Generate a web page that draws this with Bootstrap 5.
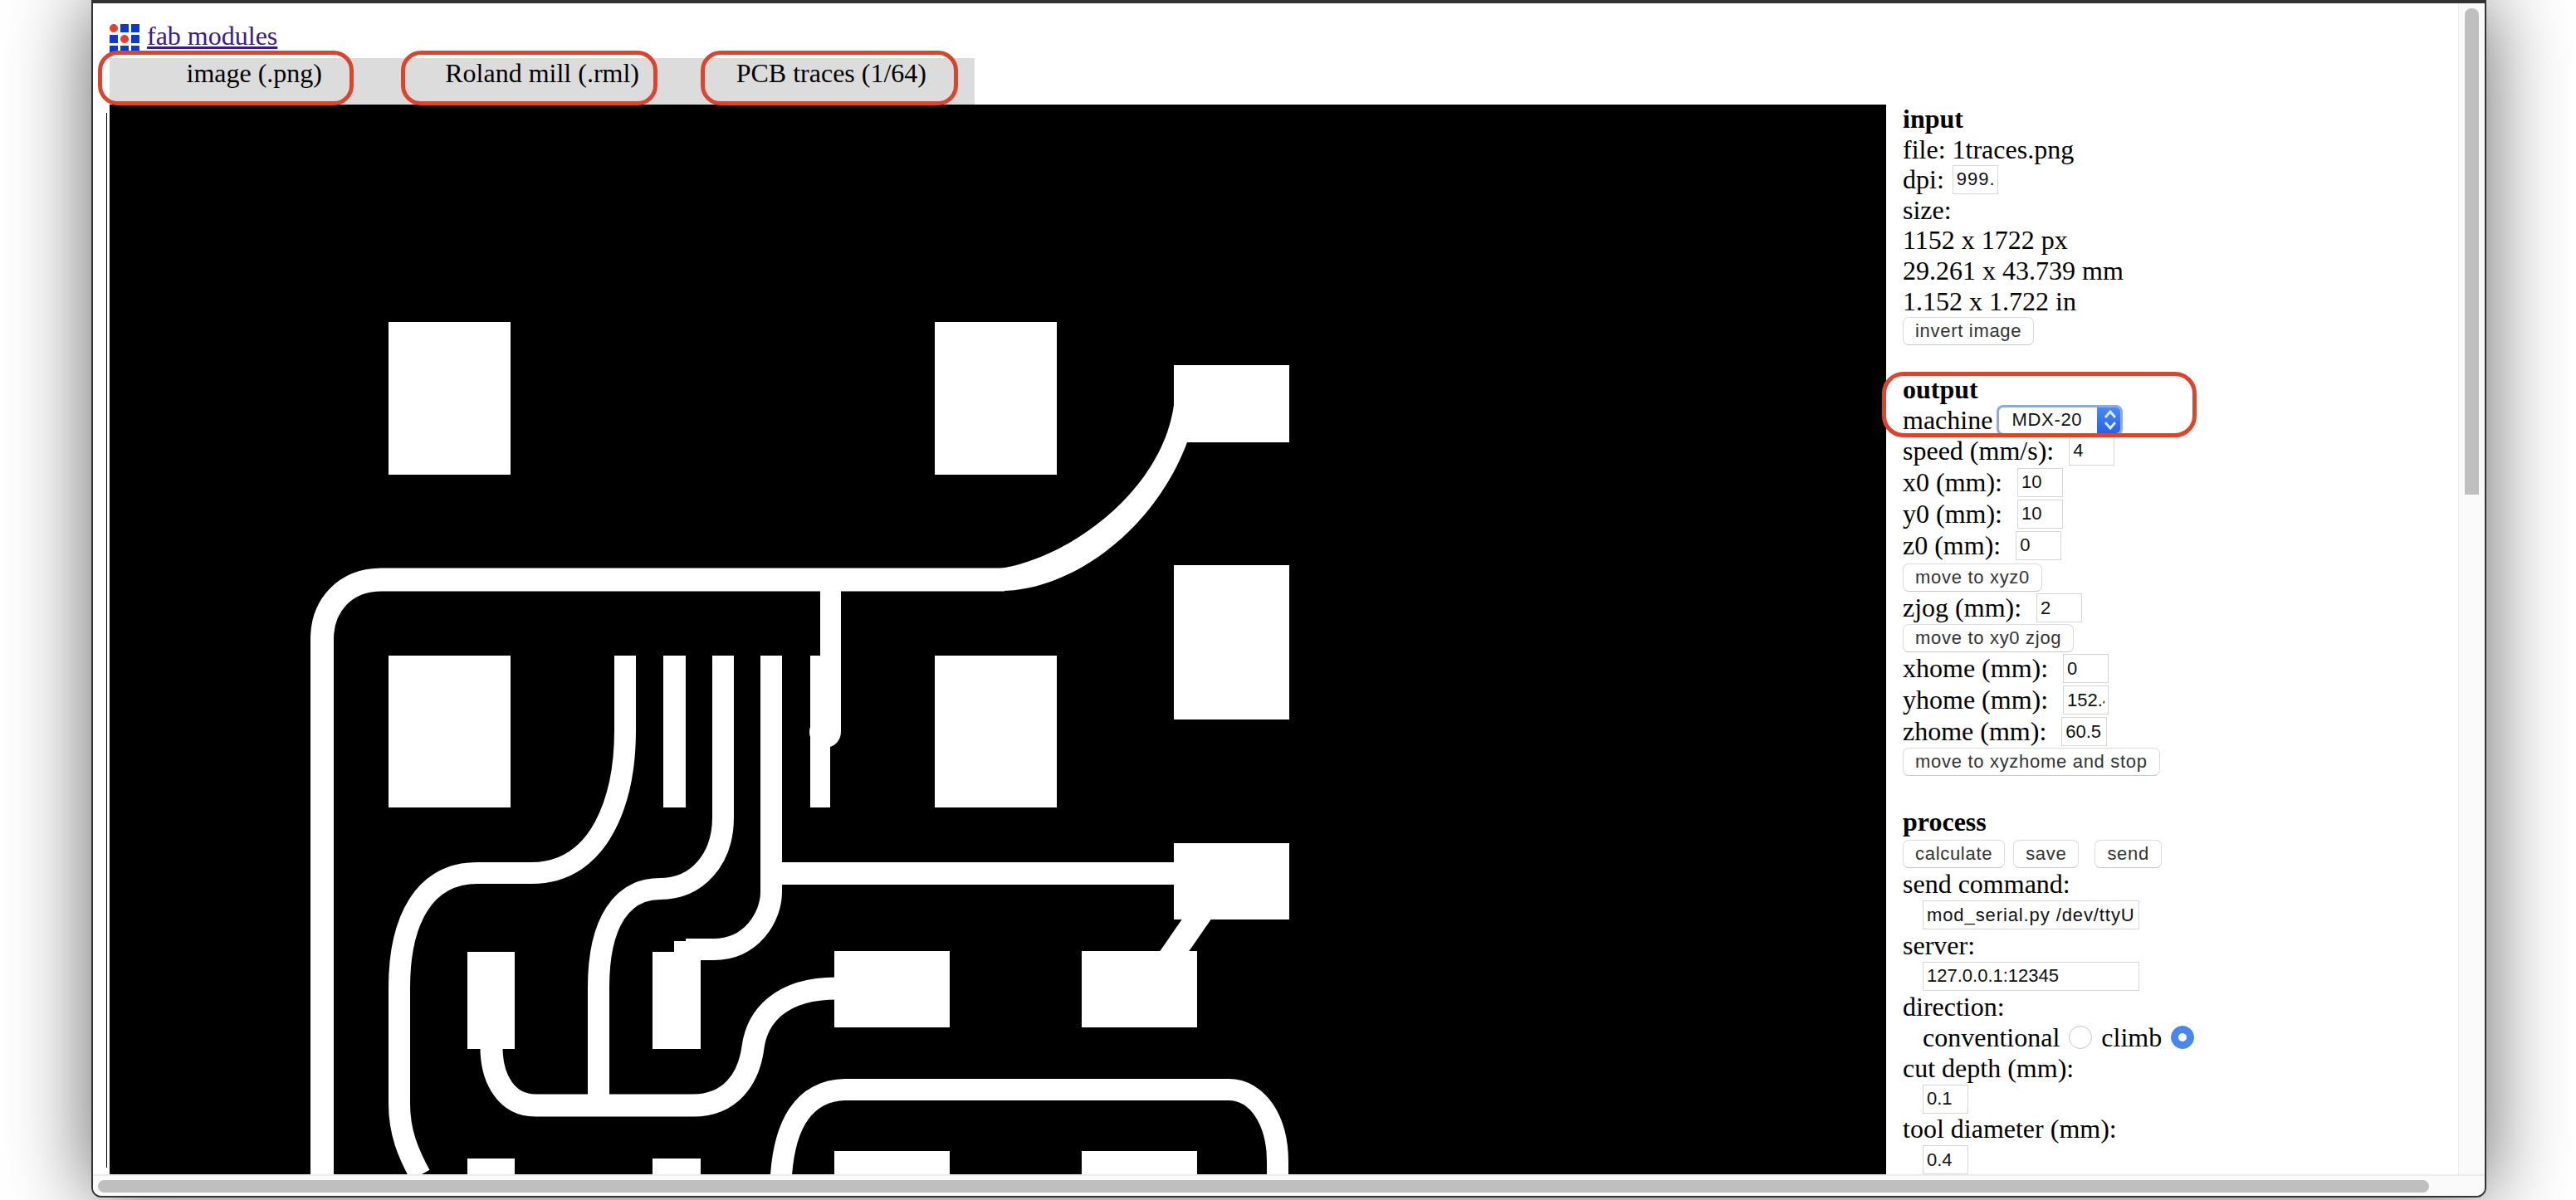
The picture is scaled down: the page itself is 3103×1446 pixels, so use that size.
<!DOCTYPE html>
<html lang="en">
<head>
  <meta charset="UTF-8">
  <title>fab modules</title>
  <link href="https://cdn.jsdelivr.net/npm/bootstrap@5.3.3/dist/css/bootstrap.min.css" rel="stylesheet">
  <style>
    html, body { height: 100%; overflow: hidden; background: #fff; }
    body { padding: 0 108px 3px 110px; font-family: "Liberation Serif", "Times New Roman", serif; font-size: 32px; line-height: 37px; color: #000; }

    .app-window { height: 100%; background: #fff; border: solid #333; border-width: 4px 2px 2px 2px; border-radius: 0 0 12px 12px; box-shadow: 0 0 100px rgba(0,0,0,.62); overflow: hidden; }
    .app-view { height: 1411px; }
    .app-page { padding: 20px 0 0 20px; min-width: 0; overflow: hidden; }
    .app-vbar { width: 32px; background: #fafafa; border-left: 1px solid #ececec; padding: 6px 7px 0 7px; }
    .app-vbar div { height: 586px; background: #bfbfbf; border-radius: 8px 8px 0 0; }
    .app-hbar { height: 29px; background: #fafafa; border-top: 2px solid #ececec; padding: 5px 0 0 6px; }
    .app-hbar div { width: 2808px; height: 15px; background: #bfbfbf; border-radius: 8px; }

    .brand-row { height: 46px; gap: 9px; }
    .brand-row a { color: #3c1a8c; line-height: 36px; margin-top: -9px; }
    .logo-grid { display: grid; grid-template-columns: repeat(3, 10px); grid-auto-rows: 10px; gap: 3px; }
    .logo-grid i { background: #0a3ad0; }
    .logo-grid i.dot { background: #e63f2a; border-radius: 50%; }

    .tab-bar { width: 1042px; height: 56px; background: #dcdcdc; }
    .tab-item { height: 54px; line-height: 36px; white-space: nowrap; text-align: right; }
    .tab-item.one { width: 256px; }
    .tab-item.two { width: 382px; }
    .tab-item.three { width: 346px; }

    .red-ring { position: absolute; border: 5px solid #d9452f; border-radius: 24px; pointer-events: none; }
    .ring-one { left: -14px; top: -9px; width: 308px; height: 66px; }
    .ring-two { left: 351px; top: -9px; width: 309px; height: 66px; }
    .ring-three { left: 712px; top: -9px; width: 310px; height: 66px; }
    .ring-output { left: -25px; top: -3px; width: 379px; height: 79px; border-radius: 26px; }

    .canvas-wrap { height: 1289px; }
    .board-edge { width: 3px; height: 1271px; margin-top: 10px; background: #fff; border-left: 1px solid #000; margin-left: -4px; margin-right: 1px; }
    .board { display: block; width: 2140px; height: 1289px; background: #000; flex: none; }
    .board rect, .board .fill { fill: #fff; }
    .board path.tr { fill: none; stroke: #fff; stroke-width: 26; stroke-linejoin: round; }

    .side-panel { width: 660px; flex: none; padding: 0 0 0 20px; margin-top: -1px; white-space: nowrap; }
    .side-panel b { font-weight: 700; }
    .side-line { height: 36.6px; }
    .side-line.wide { height: 38px; }
    .side-line.pline { height: 36.9px; }
    .indent { padding-left: 24px; }
    .gap-output { margin-top: 35px; }
    .gap-process { margin-top: 37px; }
    .btn-row { padding: 3px 0 1px; }
    .ms-save { margin-left: 10px; }
    .ms-send { margin-left: 19px; }

    .fab-btn { height: 34px; padding: 0 14px; font: 22px/30px "Liberation Sans", Arial, sans-serif; letter-spacing: .7px; color: #333; background: #fff; border: 1px solid #dcdcdc; border-bottom-color: #c8c8c8; border-radius: 7px; }
    .fab-btn.d-block { margin: .5px 0; }
    .fab-btn.d-block.drop { margin-top: 3px; }
    .fab-input { width: 55px; height: 35px; padding: 2px 4px; margin-left: 18px; font: 22px/28px "Liberation Sans", Arial, sans-serif; color: #111; background: #fff; border: 1px solid #d6d6d6; border-radius: 0; overflow: hidden; }
    .fab-input.no-gap { margin-left: 0; }
    .fab-input.near { margin-left: 10px; letter-spacing: 1px; }
    .fab-input.url { width: 261px; }
    .fab-input.spaced { letter-spacing: .9px; }
    .fab-input:focus { box-shadow: none; border-color: #d6d6d6; }

    .fab-select { width: 152px; height: 37px; margin-left: 5px; background: #fff; border: 3px solid #8fa9e6; border-radius: 8px; font: 22px/30px "Liberation Sans", Arial, sans-serif; letter-spacing: .7px; color: #111; overflow: hidden; }
    .fab-select span { padding-left: 15px; }
    .fab-select div { width: 31px; margin: -3px -3px -3px 0; background: linear-gradient(#4d8cf5, #1f5fe8); }

    .fab-radio.form-check-input { width: 28px; height: 28px; margin: 0 11px 0 11px; border: 1px solid #c8c8c8; flex: none; }
    .fab-radio.form-check-input:checked { background-color: #4a86ef; border-color: #4a86ef; background-size: 76%; }
    .fab-radio.form-check-input:focus { box-shadow: none; }
  </style>
</head>
<body>

<div class="app-window d-flex flex-column">
  <div class="app-view d-flex">
    <div class="app-page flex-grow-1">

      <div class="brand-row d-flex align-items-center">
        <div class="logo-grid">
          <i class="dot"></i><i></i><i></i>
          <i></i><i class="dot"></i><i></i>
          <i></i><i></i><i></i>
        </div>
        <a href="#">fab modules</a>
      </div>

      <div class="tab-bar d-flex position-relative">
        <div class="tab-item one">image (.png)</div>
        <div class="tab-item two">Roland mill (.rml)</div>
        <div class="tab-item three">PCB traces (1/64)</div>
        <div class="red-ring ring-one"></div>
        <div class="red-ring ring-two"></div>
        <div class="red-ring ring-three"></div>
      </div>

      <div class="canvas-wrap d-flex">
        <div class="board-edge"></div>
        <svg class="board" viewBox="132 126 2140 1289" xmlns="http://www.w3.org/2000/svg">
          <!-- pads -->
          <rect x="468" y="388" width="147" height="184"/>
          <rect x="1126" y="388" width="147" height="184"/>
          <rect x="1414" y="440" width="139" height="93"/>
          <rect x="1414" y="681" width="139" height="186"/>
          <rect x="468" y="790" width="147" height="183"/>
          <rect x="1126" y="790" width="147" height="183"/>
          <rect x="1414" y="1016" width="139" height="92"/>
          <rect x="1303" y="1146" width="139" height="92"/>
          <rect x="1005" y="1146" width="139" height="92"/>
          <rect x="563" y="1147" width="57" height="117"/>
          <rect x="786" y="1147" width="58" height="117"/>
          <rect x="563" y="1396" width="57" height="20"/>
          <rect x="786" y="1396" width="58" height="20"/>
          <rect x="1005" y="1387" width="139" height="29"/>
          <rect x="1303" y="1387" width="139" height="29"/>

          <!-- fingers -->
          <rect x="799" y="790" width="27" height="183"/>
          <rect x="976" y="790" width="37" height="92"/>
          <rect x="988" y="700" width="25" height="92"/>
          <rect x="976" y="870" width="24" height="103"/>
          <circle class="fill" cx="994" cy="882" r="19"/>

          <!-- traces -->
          <path class="tr" style="stroke-width:28" d="M388 1416 V770 C388 730 415 698.5 460 698.5 H1210"/>
          <path class="fill" d="M1205 685 C1290 672 1400 590 1414 488 L1430 533 C1390 640 1290 712 1205 712 Z"/>
          <path class="tr" d="M753 790 V880 C753 960 725 1052 640 1052 L575 1052 C510 1052 481 1110 481 1190 V1330 C481 1365 492 1390 506 1416"/>
          <path class="tr" d="M871 790 V985 C871 1035 840 1071 795 1071 C750 1071 721 1110 721 1190 V1330"/>
          <path class="tr" d="M929 790 V1075 C929 1105 905 1144 860 1144 L826 1144"/>
          <rect x="812" y="1134" width="20" height="15"/>
          <rect x="942" y="1039" width="475" height="27"/>
          <polygon class="fill" points="1425,1106 1460,1106 1431,1148 1396,1148"/>
          <path class="tr" style="stroke-width:27" d="M592 1262 C592 1300 610 1332 645 1332 L835 1332 C880 1332 902 1300 907 1262 C912 1225 940 1191 1008 1191"/>
          <path class="tr" d="M941 1416 C945 1360 965 1313 1020 1313 L1480 1313 C1515 1313 1539 1350 1539 1400 V1416"/>
        </svg>

        <div class="side-panel">
          <div>
            <div class="side-line"><b>input</b></div>
            <div class="side-line">file: 1traces.png</div>
            <div class="side-line d-flex align-items-center">dpi:<input class="fab-input near form-control" value="999.9"></div>
            <div class="side-line">size:</div>
            <div class="side-line">1152 x 1722 px</div>
            <div class="side-line">29.261 x 43.739 mm</div>
            <div class="side-line">1.152 x 1.722 in</div>
            <button class="fab-btn btn d-block">invert image</button>
          </div>

          <div class="gap-output">
            <div class="position-relative">
              <div class="side-line pline"><b>output</b></div>
              <div class="side-line pline d-flex align-items-center">machine
                <div class="fab-select d-flex justify-content-between align-items-stretch">
                  <span>MDX-20</span>
                  <div class="d-flex align-items-center justify-content-center">
                    <svg width="18" height="28" viewBox="0 0 18 28"><path d="M3 11 L9 4 L15 11 M3 17 L9 24 L15 17" fill="none" stroke="#dbe7ff" stroke-width="3"/></svg>
                  </div>
                </div>
              </div>
              <div class="red-ring ring-output"></div>
            </div>
            <div class="side-line wide d-flex align-items-center">speed (mm/s):<input class="fab-input form-control" value="4"></div>
            <div class="side-line wide d-flex align-items-center">x0 (mm):<input class="fab-input form-control" value="10"></div>
            <div class="side-line wide d-flex align-items-center">y0 (mm):<input class="fab-input form-control" value="10"></div>
            <div class="side-line wide d-flex align-items-center">z0 (mm):<input class="fab-input form-control" value="0"></div>
            <button class="fab-btn btn d-block drop">move to xyz0</button>
            <div class="side-line wide d-flex align-items-center">zjog (mm):<input class="fab-input form-control" value="2"></div>
            <button class="fab-btn btn d-block">move to xy0 zjog</button>
            <div class="side-line wide d-flex align-items-center">xhome (mm):<input class="fab-input form-control" value="0"></div>
            <div class="side-line wide d-flex align-items-center">yhome (mm):<input class="fab-input form-control" value="152.4"></div>
            <div class="side-line wide d-flex align-items-center">zhome (mm):<input class="fab-input form-control" value="60.5"></div>
            <button class="fab-btn btn d-block">move to xyzhome and stop</button>
          </div>

          <div class="gap-process">
            <div class="side-line pline"><b>process</b></div>
            <div class="btn-row d-flex">
              <button class="fab-btn btn">calculate</button>
              <button class="fab-btn btn ms-save">save</button>
              <button class="fab-btn btn ms-send">send</button>
            </div>
            <div class="side-line pline">send command:</div>
            <div class="side-line pline indent d-flex align-items-center"><input class="fab-input url spaced no-gap form-control" value="mod_serial.py /dev/ttyUSB0"></div>
            <div class="side-line pline">server:</div>
            <div class="side-line pline indent d-flex align-items-center"><input class="fab-input url no-gap form-control" value="127.0.0.1:12345"></div>
            <div class="side-line pline">direction:</div>
            <div class="side-line pline indent d-flex align-items-center">conventional<input class="fab-radio form-check-input" type="radio" name="dir">climb<input class="fab-radio form-check-input" type="radio" name="dir" checked></div>
            <div class="side-line pline">cut depth (mm):</div>
            <div class="side-line pline indent d-flex align-items-center"><input class="fab-input no-gap form-control" value="0.1"></div>
            <div class="side-line pline">tool diameter (mm):</div>
            <div class="side-line pline indent d-flex align-items-center"><input class="fab-input no-gap form-control" value="0.4"></div>
          </div>
        </div>
      </div>
    </div>

    <div class="app-vbar flex-shrink-0"><div></div></div>
  </div>
  <div class="app-hbar"><div></div></div>
</div>

<script src="https://cdn.jsdelivr.net/npm/bootstrap@5.3.3/dist/js/bootstrap.bundle.min.js"></script>
</body>
</html>
